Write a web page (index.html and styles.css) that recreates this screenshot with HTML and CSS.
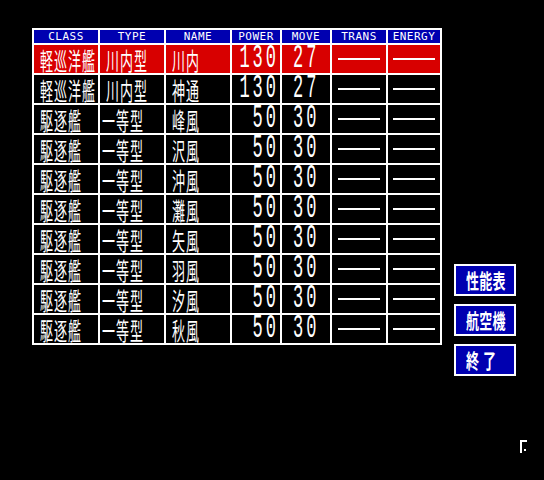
FILE: index.html
```html
<!DOCTYPE html>
<html lang="ja">
<head>
<meta charset="utf-8">
<link rel="stylesheet" href="styles.css">
</head>
<body>
<div class="screen">
  <div class="table">
    <div class="row head">
      <div class="cell">CLASS</div><div class="cell">TYPE</div><div class="cell">NAME</div><div class="cell">POWER</div><div class="cell">MOVE</div><div class="cell">TRANS</div><div class="cell">ENERGY</div>
    </div>
    <div class="row sel">
      <div class="cell k"><span>軽巡洋艦</span></div><div class="cell k"><span>川内型</span></div><div class="cell k"><span>川内</span></div><div class="cell n p"><span>130</span></div><div class="cell n m"><span>27</span></div><div class="cell d"><i></i></div><div class="cell d"><i></i></div>
    </div>
    <div class="row">
      <div class="cell k"><span>軽巡洋艦</span></div><div class="cell k"><span>川内型</span></div><div class="cell k"><span>神通</span></div><div class="cell n p"><span>130</span></div><div class="cell n m"><span>27</span></div><div class="cell d"><i></i></div><div class="cell d"><i></i></div>
    </div>
    <div class="row">
      <div class="cell k"><span>駆逐艦</span></div><div class="cell k t"><span>一等型</span></div><div class="cell k"><span>峰風</span></div><div class="cell n p"><span>50</span></div><div class="cell n m"><span>30</span></div><div class="cell d"><i></i></div><div class="cell d"><i></i></div>
    </div>
    <div class="row">
      <div class="cell k"><span>駆逐艦</span></div><div class="cell k t"><span>一等型</span></div><div class="cell k"><span>沢風</span></div><div class="cell n p"><span>50</span></div><div class="cell n m"><span>30</span></div><div class="cell d"><i></i></div><div class="cell d"><i></i></div>
    </div>
    <div class="row">
      <div class="cell k"><span>駆逐艦</span></div><div class="cell k t"><span>一等型</span></div><div class="cell k"><span>沖風</span></div><div class="cell n p"><span>50</span></div><div class="cell n m"><span>30</span></div><div class="cell d"><i></i></div><div class="cell d"><i></i></div>
    </div>
    <div class="row">
      <div class="cell k"><span>駆逐艦</span></div><div class="cell k t"><span>一等型</span></div><div class="cell k"><span>灘風</span></div><div class="cell n p"><span>50</span></div><div class="cell n m"><span>30</span></div><div class="cell d"><i></i></div><div class="cell d"><i></i></div>
    </div>
    <div class="row">
      <div class="cell k"><span>駆逐艦</span></div><div class="cell k t"><span>一等型</span></div><div class="cell k"><span>矢風</span></div><div class="cell n p"><span>50</span></div><div class="cell n m"><span>30</span></div><div class="cell d"><i></i></div><div class="cell d"><i></i></div>
    </div>
    <div class="row">
      <div class="cell k"><span>駆逐艦</span></div><div class="cell k t"><span>一等型</span></div><div class="cell k"><span>羽風</span></div><div class="cell n p"><span>50</span></div><div class="cell n m"><span>30</span></div><div class="cell d"><i></i></div><div class="cell d"><i></i></div>
    </div>
    <div class="row">
      <div class="cell k"><span>駆逐艦</span></div><div class="cell k t"><span>一等型</span></div><div class="cell k"><span>汐風</span></div><div class="cell n p"><span>50</span></div><div class="cell n m"><span>30</span></div><div class="cell d"><i></i></div><div class="cell d"><i></i></div>
    </div>
    <div class="row">
      <div class="cell k"><span>駆逐艦</span></div><div class="cell k t"><span>一等型</span></div><div class="cell k"><span>秋風</span></div><div class="cell n p"><span>50</span></div><div class="cell n m"><span>30</span></div><div class="cell d"><i></i></div><div class="cell d"><i></i></div>
    </div>
  </div>
  <div class="menu">
    <div class="btn"><span>性能表</span></div>
    <div class="btn"><span>航空機</span></div>
    <div class="btn"><span class="wide">終了</span></div>
  </div>
  <svg class="cursor" width="8" height="14" viewBox="0 0 8 14">
    <rect x="0" y="0" width="2" height="13" fill="#fff"/>
    <rect x="0" y="0" width="7" height="2" fill="#fff"/>
    <rect x="4" y="9" width="2" height="2" fill="#fff"/>
  </svg>
</div>
</body>
</html>
```

FILE: styles.css
```css
html, body {
  margin: 0;
  padding: 0;
  background: #000;
}
.screen {
  position: relative;
  width: 544px;
  height: 480px;
  background: #000;
  display: flex;
  align-items: flex-start;
  padding: 28px 0 0 32px;
  box-sizing: border-box;
  gap: 12px;
}
.table {
  display: grid;
  grid-template-columns: 64px 64px 64px 48px 48px 54px 52px;
  grid-template-rows: 13px repeat(10, 28px);
  gap: 2px;
  padding: 2px;
  background: #fff;
}
.row {
  display: contents;
}
.cell {
  background: #000;
  color: #fff;
  display: flex;
  align-items: center;
  min-width: 0;
}
.head .cell {
  background: #0000b0;
  justify-content: center;
  font-family: "DejaVu Sans Mono", monospace;
  font-size: 11px;
  line-height: 13px;
  letter-spacing: 0.5px;
}
.sel .cell {
  background: #d80000;
}
.cell span {
  display: inline-block;
  white-space: nowrap;
}
.k {
  padding-left: 6px;
  font-family: "Noto Sans CJK JP", sans-serif;
  font-size: 13px;
  line-height: 13px;
  letter-spacing: 1px;
}
.k.t {
  padding-left: 2px;
}
.k span {
  transform: scaleY(1.85);
}
.n {
  font-family: "Liberation Mono", monospace;
  font-size: 17px;
  line-height: 12px;
  letter-spacing: 3px;
}
.n span {
  transform: scaleY(2);
}
.p {
  justify-content: flex-end;
  padding-right: 1px;
}
.m {
  padding-left: 11px;
}
.d {
  justify-content: center;
}
.d i {
  display: block;
  width: 42px;
  height: 2px;
  background: #fff;
}
.menu {
  margin-top: 236px;
  display: flex;
  flex-direction: column;
  gap: 8px;
}
.btn {
  height: 28px;
  width: 48px;
  border: 2px solid #fff;
  background: #0000b0;
  color: #fff;
  display: flex;
  align-items: center;
  padding-left: 10px;
  box-sizing: content-box;
  font-family: "Noto Sans CJK JP", sans-serif;
  font-weight: 700;
  font-size: 13px;
  line-height: 13px;
}
.btn span {
  display: inline-block;
  transform: scaleY(1.55);
  letter-spacing: 0.3px;
}
.btn .wide {
  letter-spacing: 4px;
}
.cursor {
  position: absolute;
  left: 520px;
  top: 440px;
}
```
